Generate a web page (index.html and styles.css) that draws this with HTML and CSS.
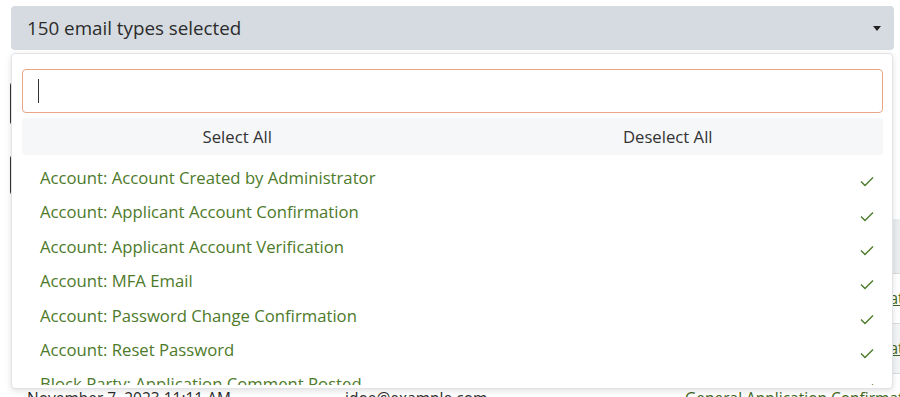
FILE: index.html
```html
<!DOCTYPE html>
<html lang="en">
<head>
  <meta charset="UTF-8" />
  <meta name="viewport" content="width=device-width, initial-scale=1.0"/>
  <title>Email Log | Filter</title>
  <link rel="stylesheet" href="styles.css">
</head>
<body>

  <div class="picker">
    <button class="picker-toggle" type="button">
      <span>150 email types selected</span>
      <span class="caret"></span>
    </button>

    <!-- open dropdown -->
    <div class="picker-menu">
      <div class="picker-search"><span class="text-cursor"></span></div>
      <div class="picker-actions">
        <button type="button">Select All</button>
        <button type="button">Deselect All</button>
      </div>
      <ul class="picker-list">
        <li>Account: Account Created by Administrator <svg class="check" viewBox="0 0 14 11"><path d="M1 5.5 L5 9.5 L13 1.5"/></svg></li>
        <li>Account: Applicant Account Confirmation <svg class="check" viewBox="0 0 14 11"><path d="M1 5.5 L5 9.5 L13 1.5"/></svg></li>
        <li>Account: Applicant Account Verification <svg class="check" viewBox="0 0 14 11"><path d="M1 5.5 L5 9.5 L13 1.5"/></svg></li>
        <li>Account: MFA Email <svg class="check" viewBox="0 0 14 11"><path d="M1 5.5 L5 9.5 L13 1.5"/></svg></li>
        <li>Account: Password Change Confirmation <svg class="check" viewBox="0 0 14 11"><path d="M1 5.5 L5 9.5 L13 1.5"/></svg></li>
        <li>Account: Reset Password <svg class="check" viewBox="0 0 14 11"><path d="M1 5.5 L5 9.5 L13 1.5"/></svg></li>
        <li>Block Party: Application Comment Posted <svg class="check" viewBox="0 0 14 11"><path d="M1 5.5 L5 9.5 L13 1.5"/></svg></li>
        <li>Block Party: Application Submitted <svg class="check" viewBox="0 0 14 11"><path d="M1 5.5 L5 9.5 L13 1.5"/></svg></li>
      </ul>
    </div>
  </div>

  <!-- page content behind the dropdown -->
  <div class="filters">
    <div class="field"></div>
    <div class="field"></div>
  </div>

  <table class="log">
    <thead>
      <tr>
        <th>Sent</th>
        <th>Recipient</th>
        <th>Email Type</th>
      </tr>
    </thead>
    <tbody>
      <tr>
        <td>November 7, 2023 11:40 AM</td>
        <td>applicant@example.com</td>
        <td><a href="#">General Application Confirmation</a></td>
      </tr>
      <tr>
        <td>November 7, 2023 11:25 AM</td>
        <td>applicant@example.com</td>
        <td><a href="#">General Application Confirmation</a></td>
      </tr>
      <tr>
        <td>November 7, 2023 11:11 AM</td>
        <td>jdoe@example.com</td>
        <td><a href="#">General Application Confirmation</a></td>
      </tr>
    </tbody>
  </table>

</body>
</html>
```

FILE: styles.css
```css
:root {
  --toggle-bg: #d6dbe1;
  --green: #4d7a2a;
  --text: #2b2b2b;
  --focus: #e9a588;
}

* {
  margin: 0;
  padding: 0;
  box-sizing: border-box;
  font-family: 'Open Sans', sans-serif;
}

body {
  background-color: #fff;
  color: var(--text);
  padding: 6px 0 0 11px;
  overflow: hidden;
}

.picker {
  position: relative;
  width: 883px;
  z-index: 5;
}

.picker-toggle {
  width: 100%;
  height: 44px;
  background-color: var(--toggle-bg);
  border: none;
  border-radius: 4px;
  padding: 0 13px 0 16px;
  display: flex;
  justify-content: space-between;
  align-items: center;
  font-size: 18.8px;
  color: var(--text);
  text-align: left;
}

.caret {
  width: 0;
  height: 0;
  border-top: 5px solid #222;
  border-left: 4px solid transparent;
  border-right: 4px solid transparent;
}

.picker-menu {
  position: absolute;
  top: 47px;
  left: 0;
  width: 882px;
  background-color: #fff;
  border: 1px solid #e1e3e6;
  border-radius: 4px;
  box-shadow: 0 2px 6px rgba(0,0,0,0.12);
  padding: 15px 9px 3px 10px;
}

.picker-search {
  height: 44px;
  border: 1px solid var(--focus);
  border-radius: 4px;
  display: flex;
  align-items: center;
  padding-left: 15px;
}

.text-cursor {
  width: 1px;
  height: 24px;
  background-color: #333;
}

.picker-actions {
  margin-top: 5px;
  height: 37px;
  background-color: #f6f7f9;
  border-radius: 3px;
  display: grid;
  grid-template-columns: 1fr 1fr;
}

.picker-actions button {
  background: none;
  border: none;
  font-size: 16.7px;
  color: #333;
  cursor: pointer;
}

.picker-list {
  list-style: none;
  margin-top: 6px;
  height: 224px;
  overflow: hidden;
}

.picker-list li {
  display: flex;
  justify-content: space-between;
  align-items: center;
  height: 34.4px;
  line-height: 34.4px;
  padding: 0 9px 0 18px;
  font-size: 16.7px;
  color: var(--green);
}

.check {
  width: 14px;
  height: 11px;
  margin-top: 7px;
  fill: none;
  stroke: var(--green);
  stroke-width: 1.4;
}

.filters {
  margin-top: 32px;
  margin-left: -1px;
  display: flex;
  flex-direction: column;
  gap: 30px;
}

.field {
  width: 600px;
  height: 43px;
  border: 1px solid #333;
  border-radius: 3px;
}

.field + .field {
  height: 40px;
}

.log {
  margin-top: 24px;
  width: 900px;
  table-layout: fixed;
  border-collapse: collapse;
  font-size: 15.5px;
}

.log th {
  height: 54px;
  background-color: #eaedef;
  text-align: left;
  padding: 0 16px;
}

.log th:nth-child(1) {
  width: 318px;
}

.log th:nth-child(2) {
  width: 340px;
}

.log td {
  height: 50px;
  padding: 0 16px;
  border-top: 1px solid #d9dcdf;
  white-space: nowrap;
  overflow: hidden;
}

.log tbody tr:nth-child(even) {
  background-color: #f3f4f5;
}

.log a {
  color: #3e6622;
}
```
